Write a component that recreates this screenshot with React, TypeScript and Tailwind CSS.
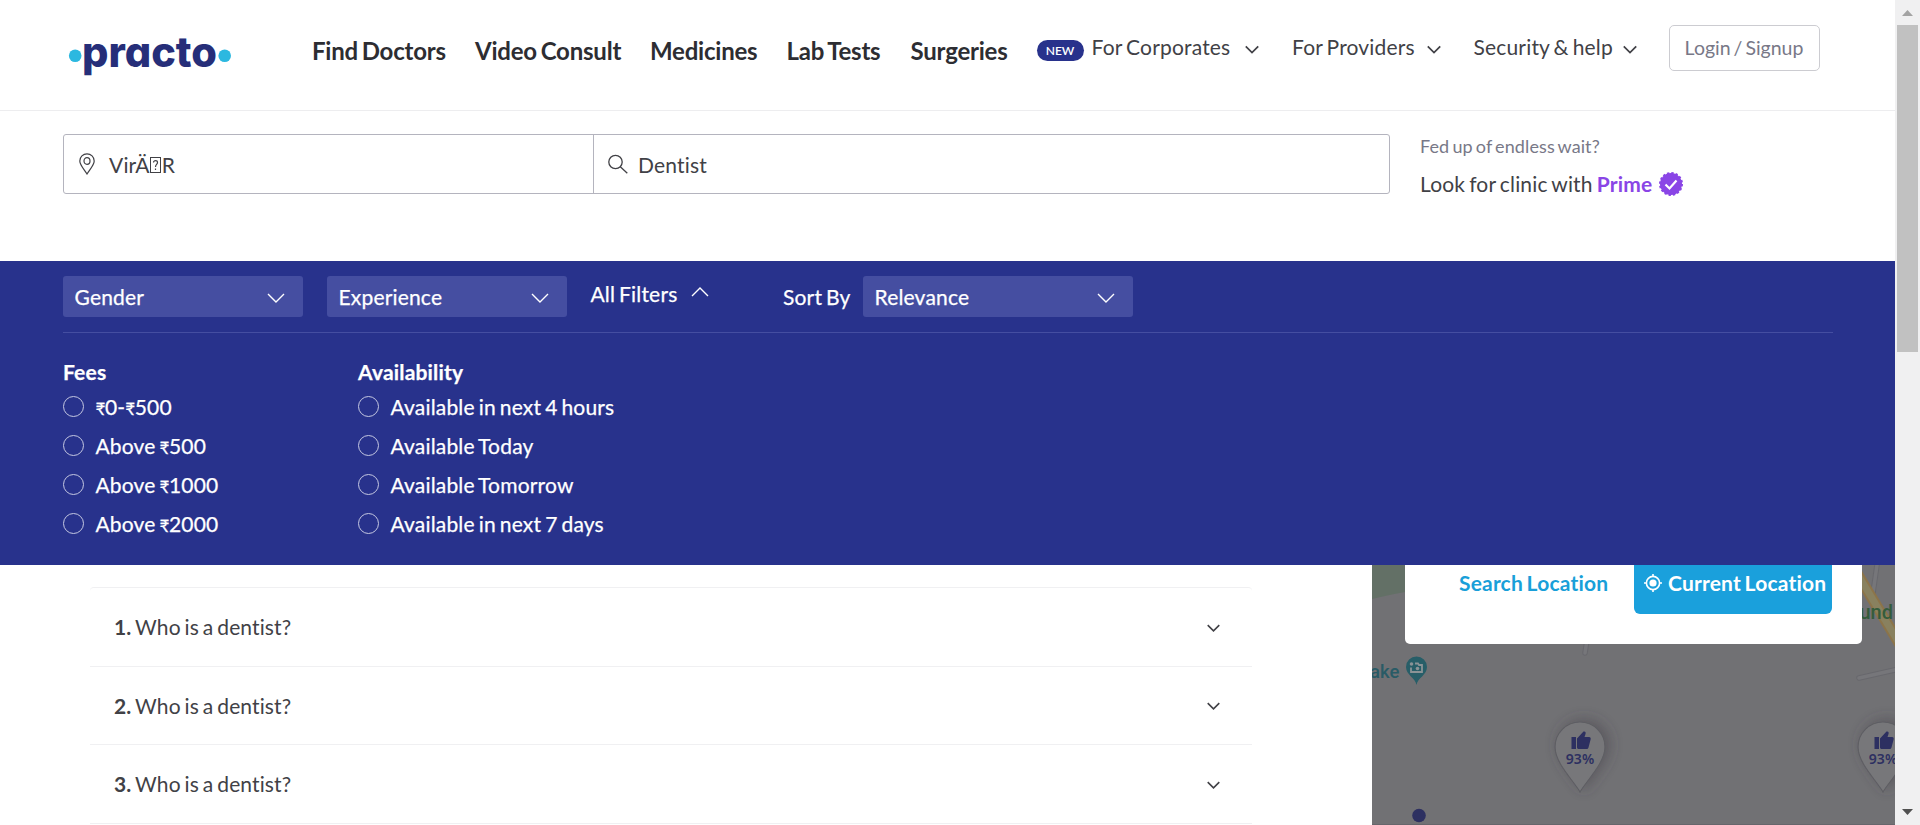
import React from "react";

const NAV = [
  { label: "Find Doctors", cls: "w-[163px]" },
  { label: "Video Consult", cls: "w-[175px]" },
  { label: "Medicines", cls: "w-[136.5px]" },
  { label: "Lab Tests", cls: "w-[124px]" },
  { label: "Surgeries", cls: "w-[126px]" },
];

const FEES = ["₹0-₹500", "Above ₹500", "Above ₹1000", "Above ₹2000"];
const AVAILABILITY = [
  "Available in next 4 hours",
  "Available Today",
  "Available Tomorrow",
  "Available in next 7 days",
];

function Chevron({ className, thin, up }: { className: string; thin?: boolean; up?: boolean }) {
  return (
    <svg className={className} viewBox="0 0 18 10" fill="none" stroke="currentColor">
      <path d={up ? "M1 9 9 1l8 8" : "M1 1l8 8 8-8"} strokeWidth={thin ? 1.4 : 2.2} />
    </svg>
  );
}

function Logo() {
  return (
    <svg className="h-[60px] w-[165px] shrink-0 overflow-visible" viewBox="68 25 165 60">
      <circle cx="75.2" cy="55.7" r="6.3" fill="#2cb8e0" />
      <circle cx="224.7" cy="55.7" r="6.3" fill="#2cb8e0" />
      <text
        x="82"
        y="66.5"
        textLength="135"
        lengthAdjust="spacingAndGlyphs"
        fill="#262e79"
        className="font-['Inter',sans-serif] text-[42px] font-extrabold tracking-normal [font-feature-settings:'cv11']"
      >
        practo
      </text>
    </svg>
  );
}

function Header() {
  return (
    <header className="flex h-[111px] items-start border-b border-[#ededef] pl-[68px]">
      <div className="pt-[25px]">
        <Logo />
      </div>
      <nav className="ml-[79px] flex pt-[33px] text-[24px] leading-[36px] font-bold tracking-[-0.22px] text-[#2d2d32] [word-spacing:-1.8px]">
        {NAV.map((n) => (
          <a key={n.label} className={n.cls}>
            {n.label}
          </a>
        ))}
      </nav>
      <div className="flex items-start text-[21px] text-[#414146]">
        <span className="mt-[40px] flex h-[21px] w-[47px] items-center justify-center rounded-full bg-[#28328c] text-[12px] leading-none font-semibold tracking-normal text-white">
          NEW
        </span>
        <div className="mt-8 ml-2 flex w-[200.5px] items-center leading-[30px]">
          For Corporates
          <Chevron className="mt-1 ml-[15px] h-[9px] w-[14px]" />
        </div>
        <div className="mt-8 flex w-[181.5px] items-center leading-[30px]">
          For Providers
          <Chevron className="mt-1 ml-[12px] h-[9px] w-[14px]" />
        </div>
        <div className="mt-8 flex w-[195px] items-center leading-[30px]">
          Security &amp; help
          <Chevron className="mt-1 ml-[10px] h-[9px] w-[14px]" />
        </div>
        <button className="mt-[25px] h-[46px] w-[151px] rounded-[5px] border border-[#ccccd1] text-[19.5px] tracking-normal text-[#787887] [word-spacing:-2px]">
          Login / Signup
        </button>
      </div>
    </header>
  );
}

function SearchBar() {
  return (
    <section className="flex h-[150px] items-start pt-[23px] pl-[63px]">
      <div className="flex h-[60px] w-[1327px] rounded-[3px] border border-[#b4b4be] text-[21px] text-[#414146]">
        <div className="flex w-[530px] items-center border-r border-[#b4b4be] pl-[15px]">
          <svg className="h-[22px] w-[16px]" viewBox="0 0 16 22" fill="none" stroke="#414146" strokeWidth="1.2">
            <path d="M8 21C5 16 .8 12 .8 8a7.2 7.2 0 0 1 14.4 0C15.2 12 11 16 8 21Z" />
            <ellipse cx="8" cy="8" rx="3" ry="3.3" />
          </svg>
          <span className="ml-[14px] flex items-center pt-[2px]">
            VirÄ
            <svg className="mx-[0.5px] h-[16px] w-[11px]" viewBox="0 0 11 16" fill="none" stroke="#414146" strokeWidth="1">
              <rect x=".5" y=".5" width="10" height="15" />
              <path d="M3.5 5.5C3.5 3 7.5 3 7.5 5.5c0 2-2 2-2 4.500M5.500 11.500v1.500" strokeWidth="1.2" />
            </svg>
            R
          </span>
        </div>
        <div className="flex items-center pl-[14px]">
          <svg className="h-[20px] w-[20px]" viewBox="0 0 20 20" fill="none" stroke="#414146" strokeWidth="1.3">
            <circle cx="7.5" cy="8" r="6.7" />
            <path d="m12.3 12.8 7 6.5" />
          </svg>
          <span className="ml-[10px] pt-[2px]">Dentist</span>
        </div>
      </div>
      <div className="ml-[30px]">
        <p className="text-[18px] leading-[24px] tracking-[0.1px] text-[#787887] [word-spacing:-1.6px]">Fed up of endless wait?</p>
        <p className="mt-[11px] flex items-center text-[21px] leading-[30px] text-[#414146]">
          Look for clinic with&nbsp;<b className="text-[#8a45e6]">Prime</b>
          <svg className="ml-[7px] h-6 w-6" viewBox="0 0 24 24">
            <circle cx="12" cy="12" r="11" fill="#8a45e6" />
            <circle cx="12" cy="12" r="11" fill="none" stroke="#8a45e6" strokeWidth="2" strokeDasharray="2.3 2.02" />
            <path d="m6.500 12.500 4 4 7-8" fill="none" stroke="#fff" strokeWidth="2.2" />
          </svg>
        </p>
      </div>
    </section>
  );
}

function Select({ label, className }: { label: string; className: string }) {
  return (
    <div className={`flex h-[41px] items-center justify-between rounded-[3px] bg-[#454ea1] pr-[18.5px] pl-[11.5px] ${className}`}>
      {label}
      <Chevron thin className="mt-[2px] h-[10px] w-[18px]" />
    </div>
  );
}

function Label({ text }: { text: string }) {
  return (
    <span>
      {text.split(/(₹)/).map((part, i) =>
        part === "₹" ? (
          <span key={i} className="text-[17px] tracking-[-0.4px]">
            ₹
          </span>
        ) : (
          part
        ),
      )}
    </span>
  );
}

function Options({ title, items, className }: { title: string; items: string[]; className: string }) {
  return (
    <div className={className}>
      <h3 className="leading-[30px] font-bold">{title}</h3>
      {items.map((o) => (
        <label key={o} className="flex h-[39px] items-center gap-[11.5px]">
          <i className="h-[21px] w-[21px] rounded-full border border-[#c5c8e2]" />
          <Label text={o} />
        </label>
      ))}
    </div>
  );
}

function Filters() {
  return (
    <section className="h-[304px] bg-[#28328c] px-[63px] text-[21px] text-white [-webkit-text-stroke:0.25px_white]">
      <div className="flex h-[72px] w-[1770px] items-center border-b border-[#454ea1]">
        <Select label="Gender" className="w-[240px]" />
        <Select label="Experience" className="ml-6 w-[240px]" />
        <div className="mb-[5px] ml-[23.5px] flex w-[192.5px] items-center">
          All Filters
          <Chevron thin up className="mb-[5px] ml-[14px] h-[10px] w-[18px]" />
        </div>
        <span className="w-[80px]">Sort By</span>
        <Select label="Relevance" className="w-[270px]" />
      </div>
      <div className="flex pt-[24px]">
        <Options title="Fees" items={FEES} className="w-[295px]" />
        <Options title="Availability" items={AVAILABILITY} className="w-[400px]" />
      </div>
    </section>
  );
}

function Faq() {
  return (
    <div className="mt-[22px] ml-[90px] h-[238px] w-[1162px] rounded-t-[4px] border-t border-[#f0f0f2] text-[21px] text-[#414146]">
      {[1, 2, 3].map((n) => (
        <div key={n} className="flex h-[79px] items-center justify-between border-b border-[#f0f0f2] pr-[32px] pl-[24px] nth-2:h-[78px]">
          <span className="tracking-[0.12px]">
            <b>{n}.</b> Who is a dentist?
          </span>
          <Chevron className="mt-px h-[8px] w-[13px]" />
        </div>
      ))}
    </div>
  );
}

function Pin({ x }: { x: number }) {
  return (
    <g transform={`translate(${x} 722)`}>
      <g filter="url(#pinShadow)">
        <path
          d="M0 70C-7 58-25 41-25 25a25 25 0 0 1 50 0C25 41 7 58 0 70Z"
          fill="#77777a"
          stroke="#5e5e63"
          strokeWidth="1.2"
        />
      </g>
      <path
        d="M-8.500 15h4.500v12h-4.500ZM-3 16.500l6.500-7c2-.5 2.500 1 2 2.500L4.500 15H9c1.500 0 2 1 1.600 2.500L8.500 25.500c-.4 1-1 1.500-2 1.500H-1c-1.500 0-2-.5-2-2Z"
        fill="#2d3061"
      />
      <text x="0" y="42" textAnchor="middle" fill="#2d3061" className="font-['Noto_Sans',sans-serif] text-[14px] font-semibold">
        93%
      </text>
    </g>
  );
}

function MapPanel() {
  return (
    <div className="relative h-[260px] w-[523px] overflow-hidden bg-[#717174]">
      <svg className="h-[260px] w-[523px] tracking-normal" viewBox="1372 565 523 260">
        <defs>
          <filter id="pinShadow" x="-60%" y="-60%" width="220%" height="220%">
            <feDropShadow dx="4" dy="-2" stdDeviation="7" floodColor="#3f3a44" floodOpacity=".5" />
          </filter>
        </defs>
        <path d="M1372 565h45v25q-20 3-45 9Z" fill="#637066" />
        <path d="m1877 565-4 28M1587 640l-2 13M1859 678l40-9" stroke="#68686d" strokeWidth="5.5" fill="none" strokeLinecap="round" />
        <path d="m1877 565-4 28M1587 640l-2 13M1859 678l40-9" stroke="#76767a" strokeWidth="3.5" fill="none" strokeLinecap="round" />
        <path d="m1852 565 50 83" stroke="#8c7449" strokeWidth="11" fill="none" />
        <path d="m1852 565 50 83" stroke="#89815f" strokeWidth="7" fill="none" />
        <text x="1893" y="619" textAnchor="end" fill="#345c3c" className="font-['Roboto',sans-serif] text-[20px] font-medium">
          ound
        </text>
        <text x="1370" y="678" fill="#295b66" className="font-['Roboto',sans-serif] text-[18.5px] font-medium">
          ake
        </text>
        <path d="M1416.500 685c-1-7-10.500-10-10.500-18a10.500 10.500 0 0 1 21 0c0 8-9.500 11-10.500 18Z" fill="#275e68" />
        <path d="M1411 667.500v4.500h11v-7h-3l-1-1.500h-3" stroke="#8a9396" strokeWidth="1.8" fill="none" />
        <circle cx="1417.5" cy="668.5" r="1.8" fill="#8a9396" />
        <circle cx="1411.5" cy="664" r="1.8" fill="#8a9396" />
        <Pin x={1580} />
        <Pin x={1883} />
        <circle cx="1419" cy="815.5" r="6.8" fill="#2d3061" />
        <path d="M1372 824.500h523" stroke="#66666b" strokeWidth="1" />
      </svg>
      <div className="absolute top-0 left-[33px] flex h-[79px] w-[457px] rounded-b-[5px] bg-white pl-[54px] text-[21px] font-bold">
        <span className="mt-[3px] w-[175px] leading-[30px] text-[#199fd9]">Search Location</span>
        <div className="flex h-[49px] w-[198px] rounded-b-[6px] bg-[#1aa0dc] pl-[10px] text-white">
          <svg className="mt-[9px] mr-[6px] h-[18px] w-[18px] shrink-0" viewBox="0 0 18 18" fill="none" stroke="#fff" strokeWidth="1.6">
            <circle cx="9" cy="9" r="6.6" />
            <circle cx="9" cy="9" r="3.6" fill="#fff" stroke="none" />
            <path d="M9 0v3M9 15v3M0 9h3M15 9h3" />
          </svg>
          <span className="mt-[3px] leading-[30px] whitespace-nowrap">Current Location</span>
        </div>
      </div>
    </div>
  );
}

function Scrollbar() {
  return (
    <div className="flex w-[25px] flex-col items-center bg-[#f0f0f1]">
      <svg className="h-[25px] w-[25px]" viewBox="0 0 25 25">
        <path d="M7 16 12.500 10 18 16Z" fill="#a3a3a3" />
      </svg>
      <div className="h-[327px] w-[21px] bg-[#c1c1c1]" />
      <svg className="mt-auto h-[25px] w-[25px]" viewBox="0 0 25 25">
        <path d="M7 9 12.500 15 18 9Z" fill="#505050" />
      </svg>
    </div>
  );
}

export default function App() {
  return (
    <div className="flex h-[825px] w-[1920px] overflow-hidden bg-white font-['Lato','Noto_Sans',sans-serif] tracking-[0.18px] [font-variant-ligatures:none] [word-spacing:-1.6px]">
      <main className="w-[1895px]">
        <Header />
        <SearchBar />
        <Filters />
        <div className="flex justify-between">
          <Faq />
          <MapPanel />
        </div>
      </main>
      <Scrollbar />
    </div>
  );
}
